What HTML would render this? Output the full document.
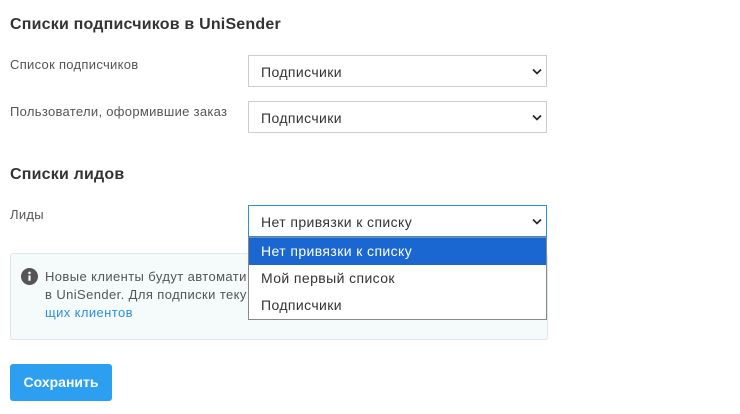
<!DOCTYPE html>
<html><head><meta charset="utf-8"><style>
body{margin:0;width:740px;height:414px;background:#fff;font-family:"Liberation Sans","DejaVu Sans",sans-serif;position:relative;overflow:hidden;color:#333}
.a{position:absolute}
h2{position:absolute;margin:0;font-size:16px;font-weight:bold;color:#333;letter-spacing:0.2px}
.lbl{position:absolute;left:10px;font-size:13px;color:#555;letter-spacing:0.3px}
.sel{position:absolute;left:248px;width:297px;height:30px;border:1px solid #ccc;background:#fff;font-size:14px;color:#333;line-height:30px;box-sizing:content-box;letter-spacing:0.4px}
.sel span{position:absolute;left:12px;top:1px}
.sel svg{position:absolute;right:4px;top:12px}
.dd{position:absolute;left:248px;top:237px;width:297px;height:81px;border:1px solid #888;background:#fff;font-size:14px;color:#333;letter-spacing:0.4px}
.dd div{height:27px;line-height:27px;padding-left:12px}
</style></head><body>
<h2 style="left:10px;top:16px">Списки подписчиков в UniSender</h2>
<div class="lbl" style="top:57px">Список подписчиков</div>
<div class="sel" style="top:55px"><span>Подписчики</span><svg width="10" height="7" viewBox="0 0 10 7"><path d="M1 1.5L5 5.5L9 1.5" fill="none" stroke="#222" stroke-width="1.6"/></svg></div>
<div class="lbl" style="top:104px">Пользователи, оформившие заказ</div>
<div class="sel" style="top:101px"><span>Подписчики</span><svg width="10" height="7" viewBox="0 0 10 7"><path d="M1 1.5L5 5.5L9 1.5" fill="none" stroke="#222" stroke-width="1.6"/></svg></div>
<h2 style="left:10px;top:166px">Списки лидов</h2>
<div class="lbl" style="top:207px">Лиды</div>
<div class="a" style="left:10px;top:253px;width:536px;height:85px;background:#f5fafb;border:1px solid #dde8ec;border-radius:3px"></div>
<svg class="a" style="left:21px;top:268px" width="17" height="17" viewBox="0 0 16 16"><circle cx="8" cy="8" r="8" fill="#555"/><rect x="7" y="7" width="2" height="5" fill="#fff"/><circle cx="8" cy="4.6" r="1.2" fill="#fff"/></svg>
<div class="a" style="left:45px;top:268px;font-size:13px;line-height:18px;color:#555;width:480px;letter-spacing:0.4px">Новые клиенты будут автомати<br>в UniSender. Для подписки теку<br><span style="color:#2d8fe0">щих клиентов</span></div>
<div class="sel" style="top:205px;border-color:#2d8fe0"><span>Нет привязки к списку</span><svg width="10" height="7" viewBox="0 0 10 7"><path d="M1 1.5L5 5.5L9 1.5" fill="none" stroke="#222" stroke-width="1.6"/></svg></div>
<div class="dd"><div style="background:#1a67d2;color:#fff">Нет привязки к списку</div><div>Мой первый список</div><div>Подписчики</div></div>
<div class="a" style="left:10px;top:364px;width:102px;height:37px;background:#2d9ff0;border-radius:3px;color:#fff;font-weight:bold;font-size:14px;line-height:37px;text-align:center">Сохранить</div>
</body></html>
